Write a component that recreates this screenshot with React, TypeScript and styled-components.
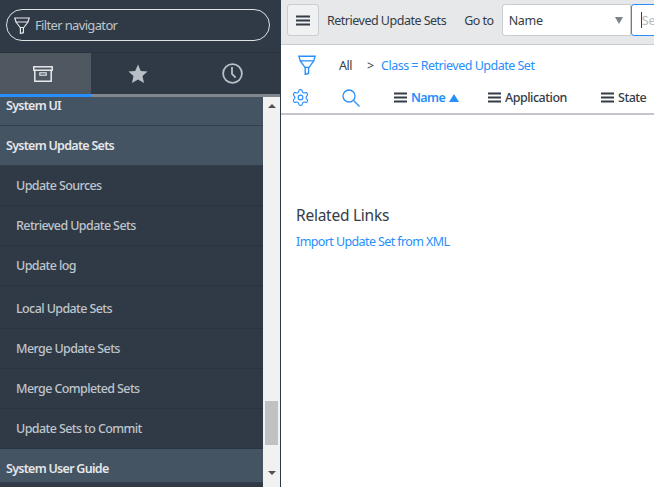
import React from "react";
import styled, { createGlobalStyle } from "styled-components";
import { Settings } from "lucide-react";

const GlobalStyle = createGlobalStyle`
  html, body {
    margin: 0;
    padding: 0;
    height: 100%;
    overflow: hidden;
    background: #ffffff;
    font-family: "Noto Sans", "Open Sans", sans-serif;
  }
`;

const FunnelIcon = ({ width, height, color }: { width: number; height: number; color: string }) => (
  <svg width={width} height={height} viewBox="0 0 16 17" fill="none" stroke={color} strokeWidth="1.2" preserveAspectRatio="none">
    <path d="M.8 1h14.400L14 5H2z" />
    <path d="M2 5l4.200 5.500h3.600L14 5" />
    <path d="M6.400 10.500v6l3-.8v-5.200" />
  </svg>
);

const ArchiveIcon = () => (
  <svg width="20" height="16" viewBox="0 0 20 16" fill="none" stroke="#e9ebed" strokeWidth="1.500">
    <rect x=".8" y=".8" width="18.400" height="3.400" />
    <path d="M1.800 4.200v11h16.400v-11" />
    <rect x="6.800" y="6.800" width="6.400" height="2.400" strokeWidth="1.100" />
  </svg>
);

const StarIcon = () => (
  <svg width="20" height="20" viewBox="0 0 20 20" fill="#b9bfc6">
    <path d="M10 .6l2.800 6.300 6.800.7-5.100 4.500 1.500 6.800L10 15.400l-6 3.500 1.500-6.800L.4 7.600l6.800-.7z" />
  </svg>
);

const ClockIcon = () => (
  <svg width="21" height="21" viewBox="0 0 21 21" fill="none" stroke="#b9bfc6" strokeWidth="1.800">
    <circle cx="10.500" cy="10.500" r="9.400" />
    <path d="M10 4v7l3.600 3.600" />
  </svg>
);

const SearchIcon = () => (
  <svg width="18" height="18" viewBox="0 0 18 18" fill="none" stroke="#278efc" strokeWidth="1.300">
    <circle cx="7" cy="7" r="6" />
    <path d="M11.500 11.500l6 6" />
  </svg>
);

const BarsIcon = ({ big }: { big?: boolean }) => (
  <svg width={big ? 14 : 13} height="11" viewBox="0 0 13 11" fill="#343d47" preserveAspectRatio="none">
    <rect y="0.500" width="13" height="2" />
    <rect y="4.500" width="13" height="2" />
    <rect y="8.500" width="13" height="2" />
  </svg>
);

const navItems = [
  { label: "System UI", kind: "head", height: 29, clipped: true },
  { label: "System Update Sets", kind: "head", height: 40 },
  { label: "Update Sources", kind: "item", height: 40 },
  { label: "Retrieved Update Sets", kind: "item", height: 40 },
  { label: "Update log", kind: "item", height: 40 },
  { label: "Local Update Sets", kind: "item", height: 43, drop: 4 },
  { label: "Merge Update Sets", kind: "item", height: 40 },
  { label: "Merge Completed Sets", kind: "item", height: 40 },
  { label: "Update Sets to Commit", kind: "item", height: 40 },
  { label: "System User Guide", kind: "head", height: 34, drop: 6 },
];

const columns = [
  { label: "Application", width: 113 },
  { label: "State", width: 60 },
];

export default function App() {
  return (
    <>
      <GlobalStyle />
      <Page>
        <Sidebar>
          <FilterArea>
            <FilterBox>
              <FunnelIcon width={16} height={17} color="#e6e8ea" />
              <FilterText>Filter navigator</FilterText>
            </FilterBox>
          </FilterArea>
          <Tabs>
            <Tab $active $width={91}>
              <ArchiveIcon />
            </Tab>
            <Tab $width={94}>
              <StarIcon />
            </Tab>
            <Tab $width={95}>
              <ClockIcon />
            </Tab>
          </Tabs>
          <NavBody>
            <NavList>
              {navItems.map((item) => (
                <NavRow
                  key={item.label}
                  $head={item.kind === "head"}
                  $height={item.height}
                  $clipped={item.clipped}
                  $drop={item.drop ?? 0}
                >
                  {item.label}
                </NavRow>
              ))}
            </NavList>
            <Scrollbar>
              <ArrowUp />
              <Track>
                <Thumb />
              </Track>
              <ArrowDown />
            </Scrollbar>
          </NavBody>
        </Sidebar>
        <Main>
          <TopBar>
            <MenuButton>
              <BarsIcon big />
            </MenuButton>
            <ListTitle>Retrieved Update Sets</ListTitle>
            <GoTo>Go to</GoTo>
            <FieldSelect>
              Name
              <Caret />
            </FieldSelect>
            <SearchBox>
              <Cursor />
              Se
            </SearchBox>
          </TopBar>
          <Breadcrumb>
            <FilterSlot>
              <FunnelIcon width={18} height={20} color="#278efc" />
            </FilterSlot>
            <CrumbAll>All</CrumbAll>
            <CrumbSep>&gt;</CrumbSep>
            <CrumbLink>Class = Retrieved Update Set</CrumbLink>
          </Breadcrumb>
          <ColumnRow>
            <ToolSlot>
              <Settings size={19} color="#278efc" strokeWidth={1.4} />
            </ToolSlot>
            <ToolSlot $wide>
              <SearchIcon />
            </ToolSlot>
            <Column $width={94}>
              <BarsIcon />
              <ColumnLabel $sorted>Name</ColumnLabel>
              <SortArrow />
            </Column>
            {columns.map((col) => (
              <Column key={col.label} $width={col.width}>
                <BarsIcon />
                <ColumnLabel>{col.label}</ColumnLabel>
              </Column>
            ))}
          </ColumnRow>
          <Related>
            <RelatedTitle>Related Links</RelatedTitle>
            <RelatedLink>Import Update Set from XML</RelatedLink>
          </Related>
        </Main>
      </Page>
    </>
  );
}

const Page = styled.div`
  display: flex;
  width: 654px;
  height: 487px;
  overflow: hidden;
`;

const Sidebar = styled.div`
  display: flex;
  flex-direction: column;
  width: 281px;
  flex-shrink: 0;
  background: #303a46;
  box-sizing: border-box;
  padding-right: 1px;
`;

const FilterArea = styled.div`
  height: 53px;
  padding: 9px 10px 0 6px;
  box-sizing: border-box;
  border-bottom: 1px solid #2a333d;
`;

const FilterBox = styled.div`
  display: flex;
  align-items: center;
  gap: 5px;
  height: 32px;
  box-sizing: border-box;
  width: 264px;
  padding-left: 7px;
  border: 1px solid #dfe2e5;
  border-radius: 16px;
`;

const FilterText = styled.span`
  font-size: 13px;
  letter-spacing: -0.65px;
  color: #bfc5cb;
`;

const Tabs = styled.div`
  display: flex;
  height: 44px;
  box-sizing: border-box;
  border-bottom: 3px solid #81878e;
`;

const Tab = styled.div<{ $active?: boolean; $width: number }>`
  width: ${(p) => p.$width}px;
  flex-shrink: 0;
  display: flex;
  align-items: center;
  justify-content: center;
  box-sizing: border-box;
  background: ${(p) => (p.$active ? "#4f5761" : "transparent")};
  margin-bottom: ${(p) => (p.$active ? "-3px" : "0")};
  padding-right: ${(p) => (p.$active ? "5px" : "0")};
  border-bottom: ${(p) => (p.$active ? "3px solid #278efc" : "none")};
`;

const NavBody = styled.div`
  flex: 1;
  display: flex;
  min-height: 0;
`;

const NavList = styled.div`
  width: 263px;
  flex-shrink: 0;
`;

const NavRow = styled.div<{ $head: boolean; $height: number; $clipped?: boolean; $drop: number }>`
  display: flex;
  align-items: ${(p) => (p.$clipped ? "flex-start" : "center")};
  height: ${(p) => p.$height}px;
  box-sizing: border-box;
  padding-left: ${(p) => (p.$head ? "6px" : "16px")};
  padding-top: ${(p) => p.$drop}px;
  background: ${(p) => (p.$head ? "#455463" : "#303a46")};
  border-bottom: 1px solid ${(p) => (p.$head ? "#343f4b" : "#293440")};
  color: ${(p) => (p.$head ? "#e4e7ea" : "#bfc5cb")};
  font-size: 12.5px;
  font-weight: ${(p) => (p.$head ? 600 : 500)};
  letter-spacing: ${(p) => (p.$head ? "-0.72px" : "-0.6px")};
  line-height: 18px;
`;

const Scrollbar = styled.div`
  width: 17px;
  display: flex;
  flex-direction: column;
  background: #f1f1f1;
  height: 390px;
`;

const ArrowUp = styled.div`
  height: 17px;
  display: flex;
  justify-content: center;
  &::before {
    content: "";
    margin-top: 7px;
    width: 0;
    height: 0;
    border-left: 4px solid transparent;
    border-right: 4px solid transparent;
    border-bottom: 4px solid #505050;
  }
`;

const ArrowDown = styled.div`
  height: 23px;
  display: flex;
  justify-content: center;
  &::before {
    content: "";
    margin-top: 7px;
    width: 0;
    height: 0;
    border-left: 4px solid transparent;
    border-right: 4px solid transparent;
    border-top: 4px solid #505050;
  }
`;

const Track = styled.div`
  flex: 1;
  display: flex;
  flex-direction: column;
  justify-content: flex-end;
  align-items: center;
  padding-bottom: 19px;
`;

const Thumb = styled.div`
  width: 13px;
  height: 44px;
  background: #c1c1c1;
`;

const Main = styled.div`
  flex: 1;
  min-width: 0;
  display: flex;
  flex-direction: column;
  overflow: hidden;
  background: #ffffff;
`;

const TopBar = styled.div`
  display: flex;
  align-items: center;
  height: 45px;
  flex-shrink: 0;
  box-sizing: border-box;
  padding: 0 0 4px 6px;
  background: #e6e8ea;
  border-bottom: 1px solid #c9ccd0;
  white-space: nowrap;
`;

const MenuButton = styled.div`
  display: flex;
  align-items: center;
  justify-content: center;
  width: 32px;
  height: 32px;
  box-sizing: border-box;
  border: 1px solid #c9ccd0;
  border-radius: 3px;
  background: #f0f1f2;
  flex-shrink: 0;
`;

const ListTitle = styled.span`
  margin-left: 8px;
  font-size: 12.5px;
  letter-spacing: -0.5px;
  color: #343d47;
`;

const GoTo = styled.span`
  margin-left: 18px;
  font-size: 12.5px;
  letter-spacing: -0.5px;
  color: #343d47;
`;

const FieldSelect = styled.div`
  position: relative;
  display: flex;
  align-items: center;
  margin-left: 8px;
  width: 129px;
  height: 32px;
  flex-shrink: 0;
  box-sizing: border-box;
  padding-left: 6px;
  background: #ffffff;
  border: 1px solid #c9ccd0;
  border-radius: 3px 0 0 3px;
  font-size: 12.5px;
  letter-spacing: -0.3px;
  color: #343d47;
`;

const Caret = styled.span`
  position: absolute;
  right: 7px;
  top: 12px;
  width: 0;
  height: 0;
  border-left: 4px solid transparent;
  border-right: 4px solid transparent;
  border-top: 7px solid #7d8389;
`;

const SearchBox = styled.div`
  display: flex;
  align-items: center;
  width: 60px;
  height: 32px;
  flex-shrink: 0;
  box-sizing: border-box;
  padding-left: 9px;
  background: #ffffff;
  border: 1px solid #278efc;
  border-radius: 3px 0 0 3px;
  font-size: 12.5px;
  color: #b5b9bd;
`;

const Cursor = styled.span`
  width: 1px;
  height: 16px;
  background: #343d47;
`;

const Breadcrumb = styled.div`
  display: flex;
  align-items: center;
  height: 40px;
  flex-shrink: 0;
  padding-left: 17px;
  font-size: 12.5px;
  letter-spacing: -0.5px;
`;

const FilterSlot = styled.div`
  width: 41px;
  display: flex;
`;

const CrumbAll = styled.span`
  color: #343d47;
  width: 28px;
`;

const CrumbSep = styled.span`
  color: #343d47;
  width: 14px;
`;

const CrumbLink = styled.span`
  color: #278efc;
`;

const ColumnRow = styled.div`
  display: flex;
  align-items: center;
  height: 30px;
  flex-shrink: 0;
  box-sizing: border-box;
  padding: 0 0 3px 10px;
  border-bottom: 2px solid #c3c7cb;
  white-space: nowrap;
`;

const ToolSlot = styled.div<{ $wide?: boolean }>`
  display: flex;
  width: ${(p) => (p.$wide ? "52px" : "51px")};
  flex-shrink: 0;
`;

const Column = styled.div<{ $width: number }>`
  display: flex;
  align-items: center;
  gap: 4px;
  width: ${(p) => p.$width}px;
  flex-shrink: 0;
`;

const ColumnLabel = styled.span<{ $sorted?: boolean }>`
  font-size: 12.5px;
  letter-spacing: ${(p) => (p.$sorted ? "-0.6px" : "-0.5px")};
  font-weight: ${(p) => (p.$sorted ? 600 : 500)};
  color: ${(p) => (p.$sorted ? "#278efc" : "#343d47")};
`;

const SortArrow = styled.span`
  width: 0;
  height: 0;
  border-left: 5px solid transparent;
  border-right: 5px solid transparent;
  border-bottom: 8px solid #278efc;
`;

const Related = styled.div`
  padding: 90px 0 0 15px;
`;

const RelatedTitle = styled.div`
  font-size: 15.5px;
  letter-spacing: -0.25px;
  line-height: 20px;
  color: #343d47;
`;

const RelatedLink = styled.div`
  margin-top: 8px;
  font-size: 12.5px;
  letter-spacing: -0.6px;
  line-height: 18px;
  color: #278efc;
`;
